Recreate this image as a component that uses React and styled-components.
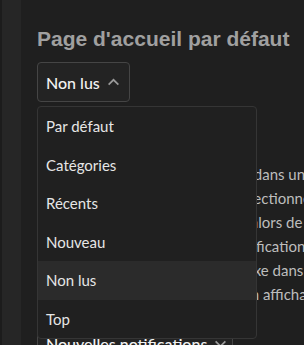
import React, { useState } from 'react';
import styled, { createGlobalStyle } from 'styled-components';

const GlobalStyle = createGlobalStyle`
	html, body {
		margin: 0;
		padding: 0;
		background: #1f1f1f;
		overflow: hidden;
	}
`;

const Page = styled.div`
	display: flex;
	width: 304px;
	height: 345px;
	overflow: hidden;
	background: #1f1f1f;
`;

const Sidebar = styled.div`
	flex: 0 0 19px;
	background: #262626;
	border-left: 2px solid #1c1c1c;
`;

const Main = styled.main`
	flex: 1;
	padding: 27px 0 0 16px;
	font-family: Lato, 'Noto Sans', sans-serif;
`;

const Title = styled.h2`
	margin: 0 0 11px;
	font-family: 'Liberation Sans', Arial, sans-serif;
	font-size: 21px;
	font-weight: 700;
	color: #a0a0a0;
	white-space: nowrap;
	line-height: 24px;
`;

const SelectWrap = styled.div`
	position: relative;
	z-index: 2;
`;

const SelectButton = styled.button`
	display: flex;
	align-items: center;
	gap: 7px;
	height: 40px;
	padding: 0 9px 0 8px;
	background: #232323;
	border: 1px solid #454545;
	border-radius: 4px;
	color: #f2f2f2;
	font-family: Lato, 'Noto Sans', sans-serif;
	font-size: 16px;
	font-weight: 500;
	white-space: nowrap;
	${props => props.wide && 'width: 196px;'}
`;

const Chevron = styled.svg`
	flex: 0 0 13px;
	width: 13px;
	height: 13px;
	stroke: #9a9a9a;
	stroke-width: 1.6;
	fill: none;
`;

const Menu = styled.ul`
	position: absolute;
	top: 44px;
	left: 0;
	width: 218px;
	margin: 0;
	padding: 0;
	list-style: none;
	background: #202020;
	border: 1px solid #353535;
	border-radius: 4px;
	overflow: hidden;
`;

const MenuItem = styled.li`
	height: 38.5px;
	display: flex;
	align-items: center;
	padding-left: 8px;
	font-size: 15px;
	color: #e6e6e6;
	background: ${props => (props.active ? '#2b2b2b' : 'transparent')};
`;

const Options = styled.div`
	display: flex;
	flex-direction: column;
	margin-top: 60px;
`;

const OptionRow = styled.div`
	height: 24px;
	display: flex;
	align-items: center;
	gap: 8px;
	white-space: nowrap;
	font-size: 15px;
	color: #bdbdbd;
`;

const Box = styled.span`
	flex: 0 0 12px;
	height: 12px;
	border: 1px solid #3a6ea5;
	border-radius: 2px;
`;

const Bottom = styled.div`
	margin-top: 17px;
`;

const options = [
	'Ouvrir tous les liens externes dans un nouvel onglet',
	'Citer en réponse ton texte sélectionné',
	'Afficher les boutons réponse alors de la saisie',
	'Afficher les compteurs de notifications',
	'Utiliser les champs de saisie fixe dans l’éditeur',
	'Masquer le sujet lu une fois en affichage',
];

const items = ['Par défaut', 'Catégories', 'Récents', 'Nouveau', 'Non lus', 'Top'];

const ChevronUp = () => (
	<Chevron viewBox="0 0 12 12">
		<path d="M1.5 8 L6 3.5 L10.5 8" />
	</Chevron>
);

const ChevronDown = () => (
	<Chevron viewBox="0 0 12 12">
		<path d="M1.5 4 L6 8.5 L10.5 4" />
	</Chevron>
);

export default function App() {
	const [selected] = useState('Non lus');

	return (
		<Page>
			<GlobalStyle />
			<Sidebar />
			<Main>
				<Title>Page d'accueil par défaut</Title>
				<SelectWrap>
					<SelectButton>
						{selected}
						<ChevronUp />
					</SelectButton>
					<Menu>
						{items.map(item => (
							<MenuItem key={item} active={item === selected}>
								{item}
							</MenuItem>
						))}
					</Menu>
				</SelectWrap>
				<Options>
					{options.map(text => (
						<OptionRow key={text}>
							<Box />
							{text}
						</OptionRow>
					))}
				</Options>
				<Bottom>
					<SelectButton wide>
						Nouvelles notifications
						<ChevronDown />
					</SelectButton>
				</Bottom>
			</Main>
		</Page>
	);
}
